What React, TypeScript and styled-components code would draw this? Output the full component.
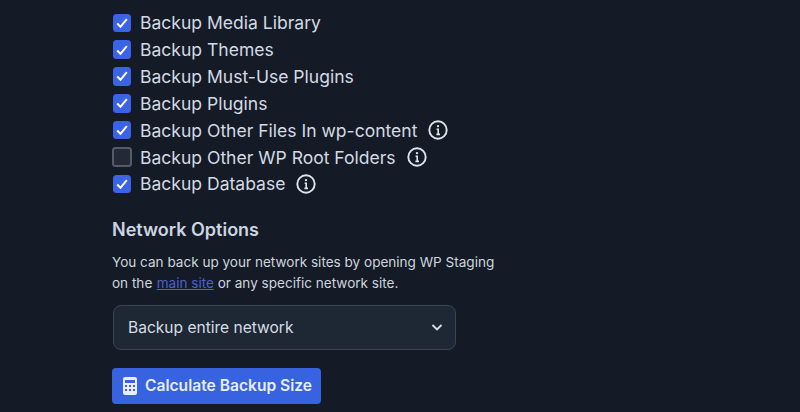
import React from 'react';
import styled, { createGlobalStyle } from 'styled-components';

const GlobalStyle = createGlobalStyle`
  html, body {
    margin: 0;
    padding: 0;
    width: 800px;
    height: 412px;
    overflow: hidden;
    background-color: #141a26;
  }
`;

const Page = styled.div`
  box-sizing: border-box;
  width: 800px;
  height: 412px;
  overflow: hidden;
  padding: 11.3px 0 0 112px;
  font-family: 'Inter', 'Liberation Sans', sans-serif;
  color: #d6dde6;
`;

const OptionList = styled.div`
  display: flex;
  flex-direction: column;
  gap: 3.85px;
`;

const OptionRow = styled.label`
  display: flex;
  align-items: center;
  height: 23px;
  font-size: 17.55px;
  color: #d3dae3;
`;

const BoxSlot = styled.span`
  width: 20px;
  height: 20px;
  margin-right: 8px;
  display: flex;
  align-items: center;
  justify-content: center;
`;

const Box = styled.span<{ $checked: boolean }>`
  box-sizing: border-box;
  width: ${(p) => (p.$checked ? '18.5px' : '20px')};
  height: ${(p) => (p.$checked ? '18.5px' : '20px')};
  border-radius: 3.5px;
  display: flex;
  align-items: center;
  justify-content: center;
  background-color: ${(p) => (p.$checked ? '#3b63e6' : '#232a36')};
  border: ${(p) => (p.$checked ? '0' : '2px solid #545c69')};
`;

const InfoIcon = styled.svg`
  width: 20px;
  height: 20px;
  margin-left: 11px;
  color: #dfe4ea;
`;

const Heading = styled.h3`
  margin: 22.7px 0 0;
  font-size: 18px;
  font-weight: 600;
  line-height: 24px;
  color: #cbd5e1;
`;

const Description = styled.p`
  margin: 10px 0 0;
  font-size: 13.55px;
  line-height: 21px;
  color: #ced5dd;
`;

const SiteLink = styled.a`
  color: #4a63d0;
  text-decoration: underline;
  margin-left: 0.6px;
`;

const SelectBox = styled.div`
  box-sizing: border-box;
  width: 343px;
  height: 45.5px;
  margin: 10.5px 0 0 1px;
  padding: 0 11px 0 14px;
  display: flex;
  align-items: center;
  justify-content: space-between;
  background-color: #1e2734;
  border: 1px solid #3a4452;
  border-radius: 8px;
  font-size: 15.55px;
  color: #d6dde6;
`;

const Button = styled.button`
  box-sizing: border-box;
  width: 209px;
  height: 36.5px;
  margin-top: 17.5px;
  padding: 0 0 0 11px;
  display: flex;
  align-items: center;
  gap: 8px;
  background-color: #3762e0;
  border: none;
  border-radius: 4px;
  font-family: inherit;
  font-size: 15.6px;
  font-weight: 600;
  color: #e8edf8;
`;

const options = [
  { label: 'Backup Media Library', checked: true, info: false },
  { label: 'Backup Themes', checked: true, info: false },
  { label: 'Backup Must-Use Plugins', checked: true, info: false },
  { label: 'Backup Plugins', checked: true, info: false },
  { label: 'Backup Other Files In wp-content', checked: true, info: true },
  { label: 'Backup Other WP Root Folders', checked: false, info: true },
  { label: 'Backup Database', checked: true, info: true },
];

const App: React.FC = () => {
  return (
    <Page>
      <GlobalStyle />
      <OptionList>
        {options.map((opt) => (
          <OptionRow key={opt.label}>
            <BoxSlot>
              <Box $checked={opt.checked}>
                {opt.checked && (
                  <svg width="14" height="14" viewBox="0 0 14 14" fill="none">
                    <path d="M2.2 7.5 L5.5 10.8 L11.8 3.2" stroke="#fff" strokeWidth="2" />
                  </svg>
                )}
              </Box>
            </BoxSlot>
            {opt.label}
            {opt.info && (
              <InfoIcon viewBox="0 0 20 20" fill="none" stroke="currentColor" strokeWidth="1.9">
                <circle cx="10" cy="10" r="8.7" />
                <path d="M8.6 9.2H10.2V14.2M8.4 14.4H12" strokeWidth="1.6" />
                <circle cx="10" cy="6.1" r="1.2" fill="currentColor" stroke="none" />
              </InfoIcon>
            )}
          </OptionRow>
        ))}
      </OptionList>
      <Heading>Network Options</Heading>
      <Description>
        You can back up your network sites by opening WP Staging
        <br />
        on the <SiteLink href="#">main site</SiteLink> or any specific network site.
      </Description>
      <SelectBox>
        Backup entire network
        <svg width="14" height="14" viewBox="0 0 14 14" fill="none">
          <path d="M2.5 5 L7 9.5 L11.5 5" stroke="#d6dde6" strokeWidth="1.9" />
        </svg>
      </SelectBox>
      <Button>
        <svg width="14" height="18" viewBox="0 0 14 18">
          <path
            fill="#e8edf8"
            fillRule="evenodd"
            d="M2 0h10a2 2 0 0 1 2 2v14a2 2 0 0 1-2 2H2a2 2 0 0 1-2-2V2a2 2 0 0 1 2-2zm0 3v3h10V3H2zm0 5v2h2V8H2zm4 0v2h2V8H6zm4 0v2h2V8h-2zM2 12v2h2v-2H2zm4 0v2h2v-2H6zm4 0v2h2v-2h-2z"
          />
        </svg>
        Calculate Backup Size
      </Button>
    </Page>
  );
};

export default App;
